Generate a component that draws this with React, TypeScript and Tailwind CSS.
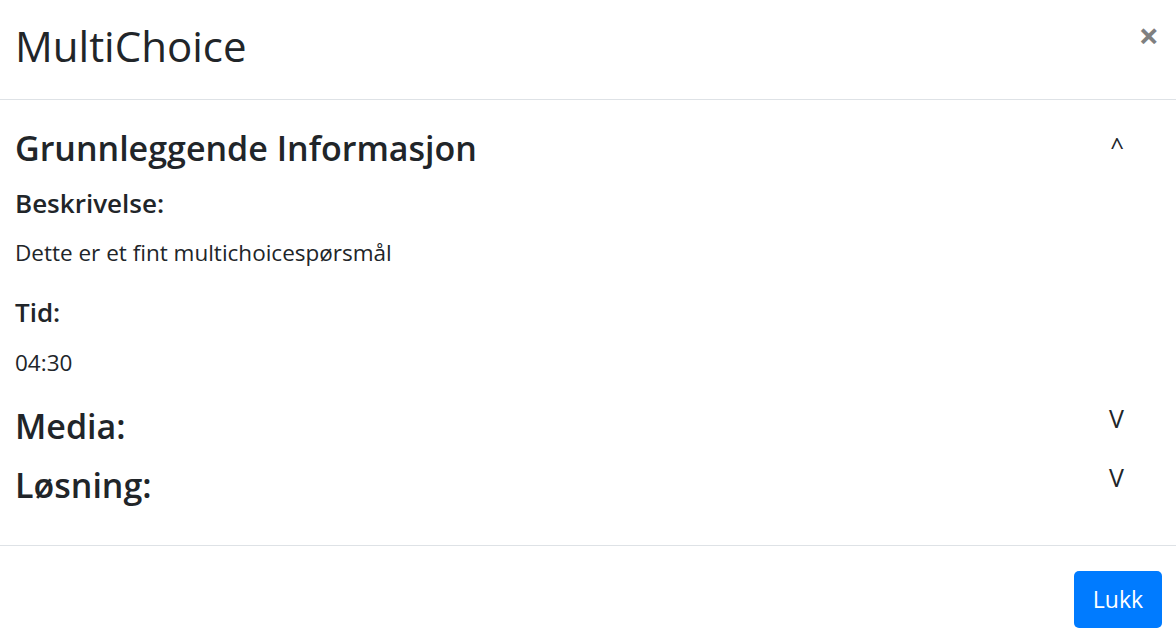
import React from "react";

export default function App() {
  return (
    <div className="w-[1176px] h-[642px] bg-white text-[#212529] font-['Open_Sans',sans-serif] overflow-hidden">
      <div className="flex justify-between items-start h-[100px] border-b border-[#dee2e6] pl-[15px] pr-[17px]">
        <h2 className="text-[42px] leading-none pt-[25px] font-normal">MultiChoice</h2>
        <button className="text-[36px] leading-none font-bold text-black/50 pt-[18px]">×</button>
      </div>
      <div className="h-[446px] border-b border-[#dee2e6] pl-[15px] pr-[52px] pt-[31px]">
        <div className="flex justify-between items-start">
          <h4 className="text-[34px] leading-none font-semibold">Grunnleggende Informasjon</h4>
          <span className="text-[24px] leading-none pt-[3px]">^</span>
        </div>
        <h5 className="text-[26px] leading-none font-semibold mt-[25px]">Beskrivelse:</h5>
        <p className="text-[22.5px] leading-none mt-[26px]">Dette er et fint multichoicespørsmål</p>
        <h5 className="text-[26px] leading-none font-semibold mt-[34px]">Tid:</h5>
        <p className="text-[22.5px] leading-none mt-[27px]">04:30</p>
        <div className="flex justify-between items-start mt-[35px]">
          <h4 className="text-[34px] leading-none font-semibold">Media:</h4>
          <span className="text-[25px] leading-none -mt-[3px]">V</span>
        </div>
        <div className="flex justify-between items-start mt-[25px]">
          <h4 className="text-[34px] leading-none font-semibold">Løsning:</h4>
          <span className="text-[25px] leading-none -mt-[3px]">V</span>
        </div>
      </div>
      <div className="flex justify-end pr-[14px] pt-[25px]">
        <button className="h-[57px] w-[88px] rounded-[5px] bg-[#007bff] text-white text-[23px]">Lukk</button>
      </div>
    </div>
  );
}
